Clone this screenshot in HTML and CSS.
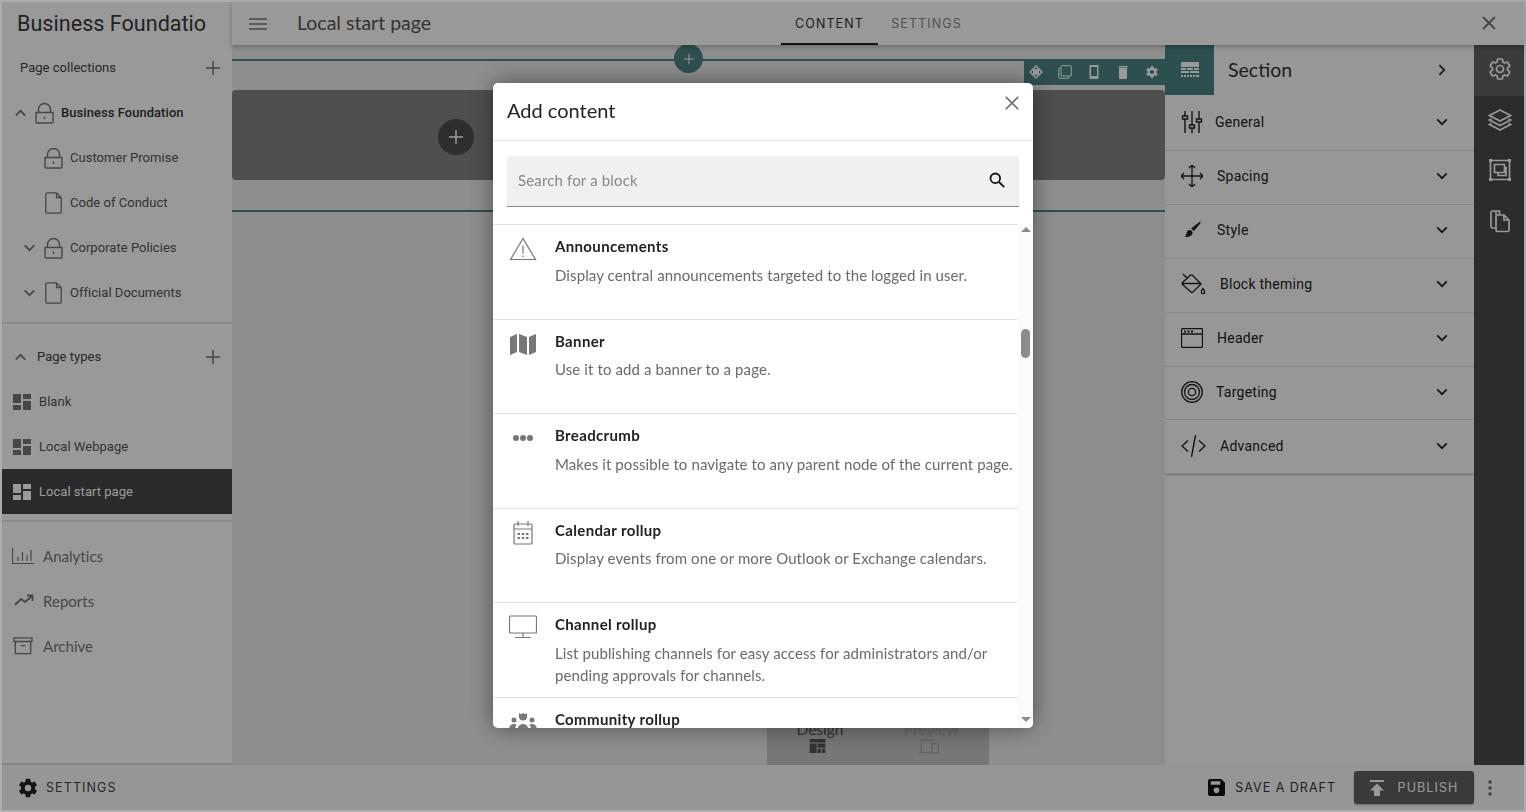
FILE: index.html
```html
<!DOCTYPE html>
<html lang="en">
  <head>
    <meta charset="UTF-8" />
    <title>Local start page</title>
    <link rel="stylesheet" href="styles.css">
  </head>
  <body>
    <!-- shared icons -->
    <svg class="defs" width="0" height="0">
      <symbol id="i-lock" viewBox="0 0 19 22"><path d="M1 10.500h17v9.500a1 1 0 0 1-1 1H2a1 1 0 0 1-1-1zM3.500 10.500V7.500a6 6 0 0 1 12 0v3M9.500 14.500v2.500" fill="none" stroke="currentColor" stroke-width="1.400"/></symbol>
      <symbol id="i-page" viewBox="0 0 17 22"><path d="M2 .8h9.500l4.700 4.700V20a1.200 1.200 0 0 1-1.200 1.200H2A1.200 1.200 0 0 1 .8 20V2A1.200 1.200 0 0 1 2 .8zM11.500.8v4.700h4.700" fill="none" stroke="currentColor" stroke-width="1.300"/></symbol>
      <symbol id="i-down" viewBox="0 0 12 8"><path d="M1.200 1.400 6 6.200l4.800-4.800" fill="none" stroke="currentColor" stroke-width="1.700"/></symbol>
      <symbol id="i-up" viewBox="0 0 12 8"><path d="M1.200 6.600 6 1.800l4.800 4.800" fill="none" stroke="currentColor" stroke-width="1.700"/></symbol>
      <symbol id="i-plus" viewBox="0 0 14 14"><path d="M7 0v14M0 7h14" fill="none" stroke="currentColor" stroke-width="1.500"/></symbol>
      <symbol id="i-layout" viewBox="0 0 18 16"><path d="M0 0h8v9H0zM10 0h8v5h-8zM10 7h8v9h-8zM0 11h8v5H0z" fill="currentColor"/></symbol>
      <symbol id="i-gear" viewBox="0 0 24 24"><path d="M19.430 12.980c.04-.32.07-.64.07-.98s-.03-.66-.07-.98l2.110-1.650c.19-.15.24-.42.12-.64l-2-3.460c-.12-.22-.39-.3-.61-.22l-2.490 1c-.52-.4-1.080-.73-1.690-.98l-.38-2.650C14.460 2.180 14.250 2 14 2h-4c-.25 0-.46.18-.49.42l-.38 2.650c-.61.25-1.170.59-1.690.98l-2.490-1c-.23-.09-.49 0-.61.22l-2 3.460c-.13.22-.07.49.12.64l2.110 1.650c-.04.32-.07.65-.07.98s.03.66.07.98l-2.110 1.650c-.19.15-.24.42-.12.64l2 3.460c.12.22.39.3.61.22l2.490-1c.52.4 1.080.73 1.690.98l.38 2.650c.03.24.24.42.49.42h4c.25 0 .46-.18.49-.42l.38-2.650c.61-.25 1.170-.59 1.690-.98l2.490 1c.23.09.49 0 .61-.22l2-3.460c.12-.22.07-.49-.12-.64zM12 15.500a3.500 3.500 0 1 1 0-7 3.500 3.500 0 0 1 0 7z"/></symbol>
    </svg>

    <div class="app">
      <div class="main">
        <aside class="sidebar">
          <div class="brand">Business Foundatio</div>

          <div class="row row-head"><span class="grow">Page collections</span><svg class="plus"><use href="#i-plus"/></svg></div>
          <div class="row lvl-1"><svg class="chev"><use href="#i-up"/></svg><svg class="lock"><use href="#i-lock"/></svg><b>Business Foundation</b></div>
          <div class="row lvl-2"><span class="chev"></span><svg class="lock"><use href="#i-lock"/></svg>Customer Promise</div>
          <div class="row lvl-2"><span class="chev"></span><svg class="lock"><use href="#i-page"/></svg>Code of Conduct</div>
          <div class="row lvl-2"><svg class="chev"><use href="#i-down"/></svg><svg class="lock"><use href="#i-lock"/></svg>Corporate Policies</div>
          <div class="row lvl-2"><svg class="chev"><use href="#i-down"/></svg><svg class="lock"><use href="#i-page"/></svg>Official Documents</div>
          <div class="divider first"></div>

          <div class="row lvl-1 types-head"><svg class="chev"><use href="#i-up"/></svg><span class="grow">Page types</span><svg class="plus"><use href="#i-plus"/></svg></div>
          <div class="row type"><svg class="layout"><use href="#i-layout"/></svg>Blank</div>
          <div class="row type"><svg class="layout"><use href="#i-layout"/></svg>Local Webpage</div>
          <div class="row type active"><svg class="layout"><use href="#i-layout"/></svg>Local start page</div>
          <div class="divider second"></div>

          <div class="row nav">
            <svg class="nav-icon" viewBox="0 0 22 16"><path d="M.5 0v15.500H22M6 13V9M10.500 13V4M15 13V7M19 13V2" fill="none" stroke="currentColor" stroke-width="1.200"/></svg>Analytics
          </div>
          <div class="row nav">
            <svg class="nav-icon" viewBox="0 0 22 16"><path d="M3 12l6-6 4 3 7-6M15 2.500h5.500V8" fill="none" stroke="currentColor" stroke-width="1.800"/></svg>Reports
          </div>
          <div class="row nav">
            <svg class="nav-icon" viewBox="0 0 22 20"><path d="M1 1h20v4H1zM2.500 5v13.500h17V5M8.500 9.500h5" fill="none" stroke="currentColor" stroke-width="1.500"/></svg>Archive
          </div>
        </aside>

        <div class="work">
          <header class="topbar">
            <svg class="burger" viewBox="0 0 18 12"><path d="M0 1h18M0 6h18M0 11h18" stroke="currentColor" stroke-width="1.500"/></svg>
            <div class="page-title">Local start page</div>
            <nav class="tabs">
              <span class="tab on">CONTENT</span>
              <span class="tab">SETTINGS</span>
            </nav>
            <svg class="top-close" viewBox="0 0 14 14"><path d="M1 1l12 12M13 1 1 13" stroke="currentColor" stroke-width="1.900"/></svg>
          </header>

          <div class="body">
            <section class="canvas">
              <div class="section-line top-line">
                <span class="add-small"><svg><use href="#i-plus"/></svg></span>
                <div class="block-tools">
                  <svg viewBox="0 0 14 14"><path d="M7 0 14 7 7 14 0 7z" fill="currentColor"/><path d="M7 2l1.700 2H5.300zM7 12 5.300 10h3.400zM2 7l2-1.700v3.400zM12 7l-2 1.700V5.300z" fill="#4d8486"/></svg>
                  <svg viewBox="0 0 14 14"><path d="M4 .7h8.300a1 1 0 0 1 1 1V10a1 1 0 0 1-1 1H4a1 1 0 0 1-1-1V1.700a1 1 0 0 1 1-1zM3 3H1.700a1 1 0 0 0-1 1v8.300a1 1 0 0 0 1 1H10a1 1 0 0 0 1-1V11" fill="none" stroke="currentColor"/></svg>
                  <svg viewBox="0 0 14 14"><path d="M3.500 0h7A1 1 0 0 1 11.500 1v12a1 1 0 0 1-1 1h-7a1 1 0 0 1-1-1V1a1 1 0 0 1 1-1zM4 2v9h6V2z" fill="currentColor" fill-rule="evenodd"/></svg>
                  <svg viewBox="0 0 14 14"><path d="M2.500 1h9v1.500h-9zM3 3h8v10a1 1 0 0 1-1 1H4a1 1 0 0 1-1-1z" fill="currentColor"/></svg>
                  <svg viewBox="0 0 24 24"><use href="#i-gear" fill="currentColor"/></svg>
                </div>
              </div>
              <div class="block">
                <span class="add-big"><svg><use href="#i-plus"/></svg></span>
              </div>
              <div class="section-line"></div>
              <div class="mode-card">
                <div class="mode">Design<svg viewBox="0 0 18 16"><path d="M0 0h18v4H0zM0 5h8v11H0zM9 5h9v5H9zM9 11h4v5H9zM14 11h4v5h-4z" fill="currentColor"/></svg></div>
                <div class="mode faded">Preview<svg viewBox="0 0 22 16"><path d="M16 1H3v13M0 14.500h13M14 5h7v10h-7z" fill="none" stroke="currentColor" stroke-width="1.500"/></svg></div>
              </div>
            </section>

            <aside class="panel">
              <div class="panel-head">
                <span class="panel-badge">
                  <svg viewBox="0 0 18 16"><path d="M0 0h18v5H0zM0 6h5v2H0zM6 6h6v2H6zM13 6h5v2h-5zM0 9h8v2H0zM9 9h9v2H9zM0 13h2v2H0zM3 13h2v2H3zM6 13h2v2H6zM9 13h2v2H9zM12 13h2v2h-2zM15 13h3v2h-3z" fill="currentColor"/></svg>
                </span>
                <span class="panel-title">Section</span>
                <svg class="side-chev" viewBox="0 0 8 12"><path d="M1.400 1.200 6.200 6l-4.800 4.800" fill="none" stroke="currentColor" stroke-width="1.700"/></svg>
              </div>
              <div class="panel-row">
                <svg class="panel-icon" viewBox="0 0 22 22"><path d="M4 0v22M11 0v22M18 0v22" stroke="currentColor" fill="none" stroke-width="1.400"/><path d="M1.500 5h5v3h-5zM8.500 14h5v3h-5zM15.500 8h5v3h-5z" fill="#fff" stroke="currentColor" stroke-width="1.400"/></svg>
                <span class="gap-g">General</span><svg class="row-chev"><use href="#i-down"/></svg>
              </div>
              <div class="panel-row">
                <svg class="panel-icon" viewBox="0 0 22 22"><path d="M11 0v22M0 11h22M8 3l3-3 3 3M8 19l3 3 3-3M3 8l-3 3 3 3M19 8l3 3-3 3" fill="none" stroke="currentColor" stroke-width="1.300"/></svg>
                <span class="gap-s">Spacing</span><svg class="row-chev"><use href="#i-down"/></svg>
              </div>
              <div class="panel-row">
                <svg class="panel-icon" viewBox="0 0 22 22"><path d="M18.500 3c.6-.5 1.400.3 1 1L13 12l-3-2.500zM8.500 11c2 0 3.500 1.300 3 3.500-.6 2.500-3.500 4-8 3.500 1.500-1 1.500-2 2-4 .3-1.500 1.500-3 3-3z" fill="currentColor"/></svg>
                <span class="gap-s">Style</span><svg class="row-chev"><use href="#i-down"/></svg>
              </div>
              <div class="panel-row">
                <svg class="panel-icon wide" viewBox="0 0 25 22"><path d="M2 1l4 4M11.500 2.200 20 11l-8 8a1.500 1.500 0 0 1-2 0L1.500 11.500a1.500 1.500 0 0 1 0-2L8 3.500a2.500 2.500 0 0 1 3.500-1.300zM.8 10.500h19.500M22 15.500c-1 1.500-1.700 2.300-1.700 3.400a1.700 1.700 0 0 0 3.400 0c0-1.100-.7-1.900-1.700-3.400z" fill="none" stroke="currentColor" stroke-width="1.300"/></svg>
                <span class="gap-b">Block theming</span><svg class="row-chev"><use href="#i-down"/></svg>
              </div>
              <div class="panel-row">
                <svg class="panel-icon" viewBox="0 0 22 20"><path d="M1.500.6h19a1 1 0 0 1 1 1v16.800a1 1 0 0 1-1 1h-19a1 1 0 0 1-1-1V1.600a1 1 0 0 1 1-1zM.5 6h21" fill="none" stroke="currentColor" stroke-width="1.300"/><path d="M3 2.500h2v2H3zM6.500 2.500h2v2h-2zM10 2.500h2v2h-2z" fill="currentColor"/></svg>
                <span class="gap-h">Header</span><svg class="row-chev"><use href="#i-down"/></svg>
              </div>
              <div class="panel-row short">
                <svg class="panel-icon" viewBox="0 0 22 22"><g fill="none" stroke="currentColor" stroke-width="1.300"><circle cx="11" cy="11" r="10.300"/><circle cx="11" cy="11" r="7.500"/><circle cx="11" cy="11" r="3.700"/></g></svg>
                <span class="gap-t">Targeting</span><svg class="row-chev"><use href="#i-down"/></svg>
              </div>
              <div class="panel-row">
                <svg class="panel-icon wide" viewBox="0 0 25 22"><path d="M7 5.500 1 11l6 5.500M18 5.500l6 5.500-6 5.500M14.500 0l-4 22" fill="none" stroke="currentColor" stroke-width="1.400"/></svg>
                <span class="gap-b">Advanced</span><svg class="row-chev"><use href="#i-down"/></svg>
              </div>
            </aside>

            <aside class="rail">
              <span class="rail-item on"><svg viewBox="0 0 24 24"><use href="#i-gear" fill="none" stroke="currentColor" stroke-width="1.700"/></svg></span>
              <span class="rail-item"><svg viewBox="0 0 24 24"><path d="M12 2 1.500 7.500 12 13l10.500-5.500zM3.500 11 1.500 12 12 17.500 22.500 12l-2-1M3.500 15.500l-2 1L12 22l10.500-5.500-2-1" fill="none" stroke="currentColor" stroke-width="1.700"/></svg></span>
              <span class="rail-item"><svg viewBox="0 0 24 24"><path d="M2.500 2.500h19v19h-19zM6.500 6.500h10v8h-10zM10 14.500v3h8v-8h-1.500" fill="none" stroke="currentColor" stroke-width="1.700"/><path d="M1 1h3v3H1zM20 1h3v3h-3zM1 20h3v3H1zM20 20h3v3h-3z" fill="currentColor"/></svg></span>
              <span class="rail-item"><svg viewBox="0 0 24 24"><path d="M8 6V3.500A1.500 1.500 0 0 0 6.500 2h-2A1.500 1.500 0 0 0 3 3.500v14A1.500 1.500 0 0 0 4.500 19H8M9.500 6H16l5 5v10a1.500 1.500 0 0 1-1.500 1.500h-10A1.500 1.500 0 0 1 8 21V7.500A1.500 1.500 0 0 1 9.500 6zM4 2h7.500v4M16 6v5h5" fill="none" stroke="currentColor" stroke-width="1.700"/></svg></span>
            </aside>
          </div>
        </div>
      </div>

      <footer class="footer">
        <svg class="foot-gear" viewBox="0 0 24 24"><use href="#i-gear" fill="currentColor"/></svg>
        <span class="foot-settings">SETTINGS</span>
        <svg class="save-icon" viewBox="0 0 18 18"><path d="M2 0h12l4 4v12a2 2 0 0 1-2 2H2a2 2 0 0 1-2-2V2a2 2 0 0 1 2-2zM3 2.500v3.500h10V2.500zM9 9a3 3 0 1 0 0 6 3 3 0 0 0 0-6z" fill="currentColor" fill-rule="evenodd"/></svg>
        <span class="save-label">SAVE A DRAFT</span>
        <button class="publish">
          <svg viewBox="0 0 14 16"><path d="M0 0h14v2H0zM7 3.500 14 10.500h-4V16H4v-5.500H0z" fill="currentColor"/></svg>PUBLISH
        </button>
        <svg class="kebab" viewBox="0 0 4 16"><circle cx="2" cy="2" r="1.700"/><circle cx="2" cy="8" r="1.700"/><circle cx="2" cy="14" r="1.700"/></svg>
      </footer>
    </div>

    <div class="overlay"></div>

    <div class="modal">
      <div class="modal-head">
        <h2>Add content</h2>
        <svg class="modal-close" viewBox="0 0 14 14"><path d="M.8.8l12.400 12.400M13.200.8.800 13.200" stroke="currentColor" stroke-width="1.800"/></svg>
      </div>
      <div class="search">
        <input type="text" placeholder="Search for a block" />
        <svg viewBox="0 0 16 16"><circle cx="6.300" cy="6.300" r="4.800" fill="none" stroke="currentColor" stroke-width="1.800"/><path d="M10 10l5.200 5.200" stroke="currentColor" stroke-width="1.800"/></svg>
      </div>
      <div class="list-wrap">
        <div class="list">
          <div class="item">
            <svg class="item-icon" viewBox="0 0 28 24"><path d="M14 1.500 1.500 22.500h25zM14 8.500v8M14 18.500v1.700" fill="none" stroke="currentColor" stroke-width="1.200"/></svg>
            <div><h3>Announcements</h3><p>Display central announcements targeted to the logged in user.</p></div>
          </div>
          <div class="item">
            <svg class="item-icon" viewBox="0 0 28 24"><path d="M1 5l7-3v18l-7 3zM10 2l8 3v18l-8-3zM20 5l7-3v18l-7 3z" fill="currentColor"/></svg>
            <div><h3>Banner</h3><p>Use it to add a banner to a page.</p></div>
          </div>
          <div class="item">
            <svg class="item-icon" viewBox="0 0 28 24"><circle cx="7" cy="12" r="3"/><circle cx="14" cy="12" r="3"/><circle cx="21" cy="12" r="3"/></svg>
            <div><h3>Breadcrumb</h3><p>Makes it possible to navigate to any parent node of the current page.</p></div>
          </div>
          <div class="item">
            <svg class="item-icon" viewBox="0 0 28 24"><path d="M6 3h16a1 1 0 0 1 1 1v18a1 1 0 0 1-1 1H6a1 1 0 0 1-1-1V4a1 1 0 0 1 1-1zM5 8h18M9 0v5M19 0v5" fill="none" stroke="currentColor" stroke-width="1.200"/><path d="M8.500 12h2.500v2H8.500zM12.800 12h2.500v2h-2.500zM17 12h2.500v2H17zM8.500 16h2.500v2H8.500zM12.800 16h2.500v2h-2.500zM17 16h2.500v2H17z" fill="currentColor"/></svg>
            <div><h3>Calendar rollup</h3><p>Display events from one or more Outlook or Exchange calendars.</p></div>
          </div>
          <div class="item">
            <svg class="item-icon" viewBox="0 0 28 24"><path d="M1.500 1h25a1 1 0 0 1 1 1v15a1 1 0 0 1-1 1h-25a1 1 0 0 1-1-1V2a1 1 0 0 1 1-1zM14 18v4M6 22.500h16" fill="none" stroke="currentColor" stroke-width="1.200"/></svg>
            <div><h3>Channel rollup</h3><p>List publishing channels for easy access for administrators and/or pending approvals for channels.</p></div>
          </div>
          <div class="item">
            <svg class="item-icon" viewBox="0 0 28 24"><circle cx="5" cy="10" r="2.500"/><circle cx="23" cy="10" r="2.500"/><path d="M10 3l2 1.200L14 3l2 1.200L18 3v3.500a4 4 0 0 1-8 0zM0 20c0-4 2-6 5-6 1 0 2 .3 2.500 1C6.500 16 6 18 6 20zM28 20c0-4-2-6-5-6-1 0-2 .3-2.500 1 1 1 1.500 3 1.500 5zM8 22c0-5 2.500-8 6-8s6 3 6 8z"/></svg>
            <div><h3>Community rollup</h3></div>
          </div>
        </div>
        <div class="scrollbar">
          <span class="arrow-up"></span>
          <span class="thumb"></span>
          <span class="arrow-down"></span>
        </div>
      </div>
    </div>
  </body>
</html>
```

FILE: styles.css
```css
* {
  box-sizing: border-box;
}

html,
body {
  margin: 0;
  height: 812px;
  overflow: hidden;
}

body {
  background: #adadad;
  font-family: Roboto, Arial, sans-serif;
  color: #333;
}

.defs {
  position: absolute;
}

.app {
  height: 812px;
  padding: 2px;
  display: flex;
  flex-direction: column;
}

.main {
  flex: 1;
  display: flex;
  min-height: 0;
}

/* left column */

.sidebar {
  width: 230px;
  background: #fff;
  border-bottom: 2px solid #ddd;
  font-size: 13px;
  letter-spacing: 0.03px;
}

.brand {
  height: 43px;
  padding-left: 15px;
  font-size: 21.600px;
  line-height: 44px;
  letter-spacing: 0;
  white-space: nowrap;
  color: #3a3a3a;
}

.row {
  height: 45px;
  display: flex;
  align-items: center;
  color: #555;
}

.grow {
  flex: 1;
}

.row-head {
  padding: 0 12px 0 18px;
  color: #444;
}

.plus {
  width: 14px;
  height: 14px;
  color: #777;
}

.chev {
  width: 15px;
  height: 8px;
  color: #777;
  flex: none;
}

.lock {
  width: 19px;
  height: 22px;
  margin: 0 7px;
  color: #777;
  flex: none;
}

.lvl-1 {
  padding-left: 11px;
}

.lvl-1 b {
  font-weight: 500;
  font-size: 12.900px;
  letter-spacing: 0.1px;
  color: #333;
}

.lvl-2 {
  padding-left: 20px;
}

.types-head {
  padding-right: 12px;
  gap: 9px;
  color: #444;
}

.divider {
  height: 2px;
  background: #e3e3e3;
}

.divider.first {
  margin: 7px 0 10px;
}

.divider.second {
  margin: 6px 0 11px;
}

.type {
  padding-left: 11px;
}

.layout {
  width: 18px;
  height: 16px;
  margin-right: 8px;
  color: #777;
}

.type.active {
  background: #474747;
  color: #fff;
}

.type.active .layout {
  color: #fff;
}

.nav {
  padding-left: 10px;
  font-family: Lato, Arial, sans-serif;
  font-size: 15px;
  font-weight: 400;
  color: #777;
}

.nav-icon {
  width: 22px;
  height: 18px;
  margin-right: 9px;
  color: #777;
}

/* top bar */

.work {
  flex: 1;
  min-width: 0;
  display: flex;
  flex-direction: column;
}

.topbar {
  height: 43px;
  flex: none;
  background: #fff;
  display: flex;
  align-items: center;
  box-shadow: 0 2px 5px rgba(0, 0, 0, 0.25);
  position: relative;
  z-index: 2;
}

.burger {
  width: 18px;
  height: 12px;
  margin-left: 17px;
  color: #777;
}

.page-title {
  width: 484px;
  margin-left: 30px;
  padding-bottom: 2px;
  font-family: Lato, Arial, sans-serif;
  font-size: 19.500px;
  color: #555;
}

.tabs {
  display: flex;
  height: 43px;
  font-family: Inter, Arial, sans-serif;
  font-size: 12.500px;
  letter-spacing: 1.100px;
}

.tab {
  width: 97px;
  line-height: 43px;
  text-align: center;
  color: #888;
}

.tab.on {
  color: #333;
  border-bottom: 2px solid #222;
}

.top-close {
  width: 14px;
  height: 14px;
  margin-left: auto;
  margin-right: 28px;
  margin-bottom: 2px;
  color: #777;
}

/* canvas */

.body {
  flex: 1;
  min-height: 0;
  display: flex;
}

.canvas {
  flex: 1;
  min-width: 0;
  background: #ededed;
  display: flex;
  flex-direction: column;
  position: relative;
}

.section-line {
  height: 2px;
  background: #4d8486;
  position: relative;
}

.top-line {
  margin-top: 14px;
}

.add-small {
  position: absolute;
  left: 442px;
  top: -15px;
  width: 29px;
  height: 29px;
  border-radius: 50%;
  background: #4d8486;
  color: #fff;
  display: flex;
  align-items: center;
  justify-content: center;
}

.add-small svg {
  width: 10px;
  height: 10px;
}

.block-tools {
  position: absolute;
  right: 0;
  top: 0;
  width: 141px;
  height: 26px;
  background: #4d8486;
  border-radius: 0 0 0 3px;
  display: flex;
  align-items: center;
  gap: 15px;
  padding-left: 5px;
  color: #fff;
}

.block-tools svg {
  width: 14px;
  height: 14px;
  flex: none;
}

.block {
  height: 90px;
  margin-top: 29px;
  background: #848484;
  border-radius: 4px;
  position: relative;
}

.add-big {
  position: absolute;
  left: 206px;
  top: 29px;
  width: 36px;
  height: 36px;
  border-radius: 50%;
  background: #4e4e4e;
  color: #fff;
  display: flex;
  align-items: center;
  justify-content: center;
}

.add-big svg {
  width: 14px;
  height: 14px;
}

.block + .section-line {
  margin-top: 30px;
}

.mode-card {
  margin-top: auto;
  margin-left: 535px;
  width: 222px;
  height: 42px;
  background: #c6c6c6;
  display: flex;
}

.mode {
  width: 106px;
  display: flex;
  flex-direction: column;
  align-items: center;
  font-family: Lato, Arial, sans-serif;
  font-size: 15.500px;
  line-height: 16px;
  color: #555;
  padding-top: 2px;
  margin-top: -4px;
}

.mode svg {
  width: 17px;
  height: 14px;
  margin: 2px 6px 0 0;
}

.mode.faded {
  width: 116px;
  color: #a8a8a8;
}

.mode.faded svg {
  width: 22px;
  height: 15px;
  margin-right: 4px;
}

/* section panel */

.panel {
  width: 309px;
  flex: none;
  background: #fcfcfc;
  font-size: 14px;
  letter-spacing: 0.25px;
  color: #222;
}

.panel-head {
  height: 50px;
  display: flex;
  align-items: center;
}

.panel-badge {
  width: 49px;
  height: 50px;
  background: #4d8486;
  color: #fff;
  display: flex;
  align-items: center;
  justify-content: center;
}

.panel-badge svg {
  width: 18px;
  height: 16px;
}

.panel-title {
  flex: 1;
  margin-left: 14px;
  padding-bottom: 2px;
  font-family: Lato, Arial, sans-serif;
  font-size: 19.500px;
  letter-spacing: 0;
  color: #333;
}

.side-chev {
  width: 8px;
  height: 12px;
  margin-right: 28px;
  color: #222;
}

.panel-row {
  height: 54px;
  padding: 0 0 3px 16px;
  display: flex;
  align-items: center;
  border-bottom: 1px solid #e2e2e2;
}

.panel-head + .panel-row {
  height: 56px;
  padding-bottom: 2px;
}

.panel-row.short,
.panel-row:last-child {
  padding-bottom: 2px;
}

.panel-row.short {
  height: 53px;
}

.panel-row:last-child {
  box-shadow: 0 1px 2px rgba(0, 0, 0, 0.3);
}

.panel-icon {
  width: 22px;
  height: 22px;
  color: #222;
  flex: none;
}

.panel-icon.wide {
  width: 25px;
}

.panel-row span {
  flex: 1;
}

.gap-g {
  margin-left: 12px;
}

.gap-s {
  margin-left: 14px;
}

.gap-b {
  margin-left: 14px;
}

.gap-h {
  margin-left: 14px;
}

.gap-t {
  margin-left: 13px;
}

.row-chev {
  width: 12px;
  height: 8px;
  margin-right: 26px;
  color: #222;
}

/* dark rail */

.rail {
  width: 50px;
  flex: none;
  background: #4a4a4a;
  color: #fff;
}

.rail-item {
  height: 50.700px;
  padding: 0 0 3px 2px;
  display: flex;
  align-items: center;
  justify-content: center;
}

.rail-item.on {
  background: #636363;
}

.rail-item svg {
  width: 24px;
  height: 24px;
}

/* bottom bar */

.footer {
  height: 45px;
  flex: none;
  background: #fbfbfb;
  display: flex;
  align-items: center;
  font-family: Inter, Arial, sans-serif;
  font-size: 12.500px;
  letter-spacing: 1.100px;
  color: #444;
}

.foot-gear {
  width: 22px;
  height: 22px;
  margin-left: 15px;
  color: #222;
  flex: none;
}

.foot-settings {
  margin-left: 7px;
  flex: 1;
}

.save-icon {
  width: 17px;
  height: 17px;
  color: #111;
}

.save-label {
  margin-left: 10px;
  margin-right: 18px;
  color: #333;
  letter-spacing: 1px;
}

.publish {
  width: 120px;
  height: 33px;
  border: 0;
  border-radius: 3px;
  background: #616161;
  color: #fff;
  font: inherit;
  letter-spacing: inherit;
  display: flex;
  align-items: center;
  justify-content: center;
  gap: 14px;
  box-shadow: 0 1px 2px rgba(0, 0, 0, 0.3);
}

.publish svg {
  width: 14px;
  height: 16px;
}

.kebab {
  width: 4px;
  height: 16px;
  margin: 0 32px 0 14px;
  fill: #666;
}

/* modal dialog */

.overlay {
  position: fixed;
  inset: 2px;
  background: rgba(0, 0, 0, 0.4);
  z-index: 10;
}

.modal {
  position: fixed;
  left: 493px;
  top: 83px;
  width: 540px;
  height: 645px;
  z-index: 11;
  background: #fff;
  border-radius: 5px;
  overflow: hidden;
  box-shadow: 0 0 24px rgba(0, 0, 0, 0.45);
  display: flex;
  flex-direction: column;
  font-family: Lato, Arial, sans-serif;
}

.modal-head {
  height: 58px;
  flex: none;
  border-bottom: 1px solid #e2e2e2;
  padding: 0 14px 3px;
  display: flex;
  align-items: center;
  justify-content: space-between;
}

.modal-head h2 {
  margin: 0;
  font-size: 20px;
  font-weight: 400;
  color: #222;
}

.modal-close {
  width: 14px;
  height: 14px;
  margin-bottom: 15px;
  color: #777;
}

.search {
  height: 51px;
  margin: 15px 14px 17px;
  flex: none;
  background: #f0f0f0;
  border-bottom: 1px solid #888;
  border-radius: 3px 3px 0 0;
  padding: 0 14px 2px 11px;
  display: flex;
  align-items: center;
}

.search input {
  flex: 1;
  padding: 0;
  border: 0;
  background: none;
  font: inherit;
  font-size: 15px;
  letter-spacing: 0.15px;
  outline: none;
}

.search input::placeholder {
  color: #888;
}

.search svg {
  width: 16px;
  height: 16px;
  color: #111;
}

.list-wrap {
  flex: 1;
  min-height: 0;
  display: flex;
}

.list {
  flex: 1;
  overflow: hidden;
  border-top: 1px solid #e2e2e2;
}

.item {
  height: 94.500px;
  padding: 10px 0 0 16px;
  display: flex;
  gap: 18px;
  border-bottom: 1px solid #e2e2e2;
}

.item-icon {
  width: 28px;
  height: 24px;
  margin-top: 2px;
  flex: none;
  color: #777;
  fill: #777;
}

.item h3 {
  margin: 0 0 6.600px;
  font-size: 15px;
  line-height: 22px;
  font-weight: 700;
  letter-spacing: 0.35px;
  color: #222;
}

.item p {
  margin: 0;
  font-size: 15px;
  line-height: 22px;
  letter-spacing: 0.1px;
  color: #6a6a6a;
}

.scrollbar {
  width: 15px;
  flex: none;
  background: #fbfbfb;
  position: relative;
}

.thumb {
  position: absolute;
  left: 3px;
  top: 105px;
  width: 9px;
  height: 29px;
  border-radius: 5px;
  background: #8c8c8c;
}

.arrow-up,
.arrow-down {
  position: absolute;
  left: 3px;
  border-left: 5px solid transparent;
  border-right: 5px solid transparent;
}

.arrow-up {
  top: 3px;
  border-bottom: 5px solid #8c8c8c;
}

.arrow-down {
  bottom: 6px;
  border-top: 5px solid #8c8c8c;
}
```
